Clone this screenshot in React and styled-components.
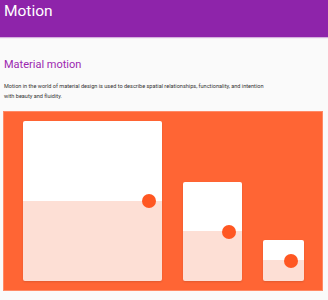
import React from "react";
import styled, { createGlobalStyle } from "styled-components";

const Global = createGlobalStyle`
  html, body { margin: 0; padding: 0; background: #fafafa; }
  body { font-family: Roboto, "Liberation Sans", sans-serif; }
`;

const Header = styled.header`
  height: 37px;
  background: #8e24aa;
  box-shadow: 0 1px 1px rgba(142, 36, 170, 0.35);
  padding: 0 4px;
  box-sizing: border-box;
  display: flex;
  align-items: flex-start;
`;

const HeaderTitle = styled.h1`
  margin: 0;
  color: #fff;
  font-size: 15.5px;
  font-weight: 400;
  line-height: 22px;
`;

const Content = styled.main`
  padding: 21px 3px 0 3px;
  display: flex;
  flex-direction: column;
`;

const Title = styled.h2`
  margin: 0 0 0 1px;
  color: #9c27b0;
  font-size: 11px;
  font-weight: 400;
  line-height: 14px;
`;

const Paragraph = styled.p`
  margin: 9px 0 0 1px;
  width: 266px;
  color: #333;
  font-size: 5.55px;
  line-height: 10px;
`;

const Stage = styled.section`
  margin-top: 10px;
  height: 180px;
  width: 320px;
  box-sizing: border-box;
  background: #ff6534;
  border: 1px solid #ff8a66;
  padding: 9px 19px 9px 19px;
  display: flex;
  align-items: flex-end;
  gap: 21px;
`;

const Card = styled.div`
  position: relative;
  width: ${(p) => p.$w}px;
  height: ${(p) => p.$h}px;
  border-radius: 2px;
  background: linear-gradient(to bottom, #ffffff 50%, #fddfd5 50%);
  box-shadow: 0 1px 2px rgba(0, 0, 0, 0.12);
  flex-shrink: 0;
`;

const Dot = styled.span`
  position: absolute;
  right: 6px;
  top: 50%;
  width: 14px;
  height: 14px;
  margin-top: -7px;
  border-radius: 50%;
  background: #ff5722;
`;

const cards = [
  { w: 139, h: 160 },
  { w: 59, h: 99 },
  { w: 41, h: 41 },
];

export default function App() {
  return (
    <>
      <Global />
      <Header>
        <HeaderTitle>Motion</HeaderTitle>
      </Header>
      <Content>
        <Title>Material motion</Title>
        <Paragraph>
          Motion in the world of material design is used to describe spatial
          relationships, functionality, and intention with beauty and fluidity.
        </Paragraph>
        <Stage>
          {cards.map((c, i) => (
            <Card key={i} $w={c.w} $h={c.h}>
              <Dot />
            </Card>
          ))}
        </Stage>
      </Content>
    </>
  );
}
